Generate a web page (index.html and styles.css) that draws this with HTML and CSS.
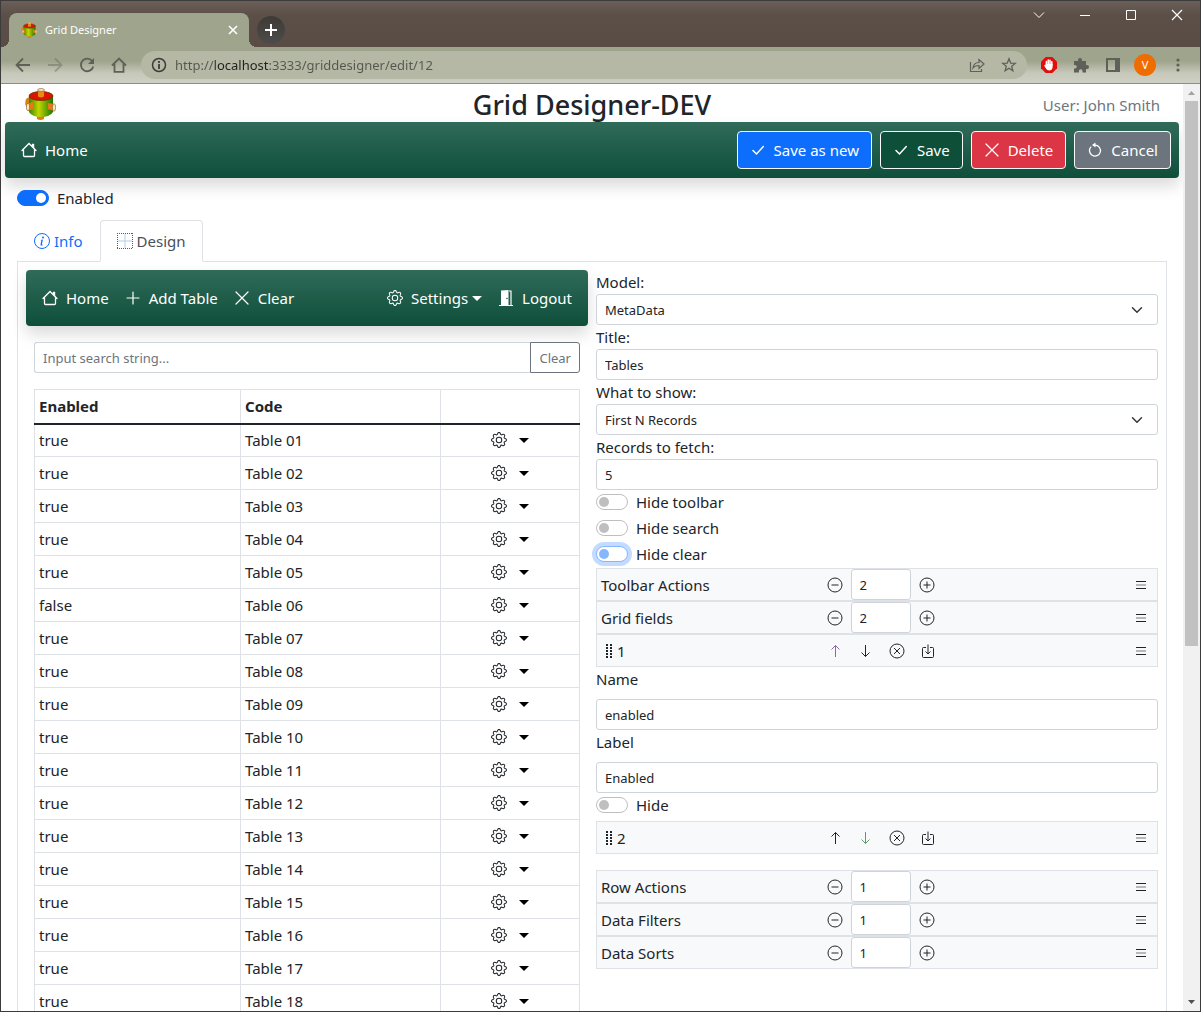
FILE: index.html
```html
<!DOCTYPE html>
<html lang="en">
<head>
<meta charset="utf-8">
<title>Grid Designer</title>
<link rel="stylesheet" href="styles.css">
</head>
<body>
<svg class="sprite" aria-hidden="true">
  <linearGradient id="can" x1="0" x2="1"><stop offset="0" stop-color="#2f8a00"/><stop offset=".4" stop-color="#c4d600"/><stop offset="1" stop-color="#167800"/></linearGradient>
  <symbol id="logo" viewBox="0 0 32 32">
    <path d="M13 27h7v4q-3.500 2-7 0z" fill="#e07a10"/>
    <path d="M2 11q3-3 4-1v9H3q-3-3-1-8z" fill="#d98212"/>
    <path d="M5 8v16q3 5 12 5t12-5V8z" fill="url(#can)"/>
    <ellipse cx="17" cy="8" rx="12" ry="4.500" fill="#dc1400" stroke="#5c3b00" stroke-width=".8"/>
    <path d="M14 2h6v6.500q-3 2-6 0z" fill="#e88a16"/>
    <ellipse cx="17" cy="2" rx="3.500" ry="1.400" fill="#fbeeb0" stroke="#77502a" stroke-width=".6"/>
    <path d="M4 15.500l5-1.500v7l-5 2z" fill="#e87818"/>
    <ellipse cx="4" cy="19" rx="1.600" ry="3.800" fill="#fbeeb0" stroke="#77502a" stroke-width=".6"/>
    <path d="M24 15l6 1v7l-6-2z" fill="#e87818"/>
    <ellipse cx="30" cy="19.500" rx="1.600" ry="3.800" fill="#fbeeb0" stroke="#77502a" stroke-width=".6"/>
  </symbol>
  <symbol id="house" viewBox="0 0 16 16"><path d="M2.500 7.500v6a1 1 0 0 0 1 1h9a1 1 0 0 0 1-1v-6M1 8.500l7-7 7 7" fill="none" stroke="currentColor" stroke-width="1.300" stroke-linecap="round"/><path d="M13.200 2.300V6.500l-2.400-2.400V2.300a.5.5 0 0 1 .5-.5h1.400a.5.5 0 0 1 .5.5z"/></symbol>
  <symbol id="check" viewBox="0 0 16 16"><path d="M3 8.500l3.500 3.500L13.300 4.500" fill="none" stroke="currentColor" stroke-width="1.500" stroke-linecap="round"/></symbol>
  <symbol id="cross" viewBox="0 0 16 16"><path d="M2 2l12 12M14 2L2 14" fill="none" stroke="currentColor" stroke-width="1.200" stroke-linecap="round"/></symbol>
  <symbol id="plus" viewBox="0 0 16 16"><path d="M8 2v12M2 8h12" fill="none" stroke="currentColor" stroke-width="1.200" stroke-linecap="round"/></symbol>
  <symbol id="undo" viewBox="0 0 16 16"><path d="M4.200 4.600a5.500 5.500 0 1 0 3.800-1.500" fill="none" stroke="currentColor" stroke-width="1.300"/><path d="M8.500.5v5L5 3z"/></symbol>
  <symbol id="info" viewBox="0 0 16 16"><circle cx="8" cy="8" r="7.500" fill="none" stroke="currentColor"/><path d="M8.930 6.588l-2.290.287-.082.380.450.083c.294.070.352.176.288.469l-.738 3.468c-.194.897.105 1.319.808 1.319.545 0 1.178-.252 1.465-.598l.088-.416c-.200.176-.492.246-.686.246-.275 0-.375-.193-.304-.533z"/><circle cx="9" cy="4.500" r="1"/></symbol>
  <symbol id="gridlines" viewBox="0 0 16 16"><path d="M0 .5h16M0 15.500h16M.5 0v16M15.500 0v16" fill="none" stroke="#5a5475" stroke-dasharray="1 1"/><path d="M8 1v14M1 8h14" fill="none" stroke="#b4cfe6"/></symbol>
  <symbol id="gear" viewBox="0 0 16 16"><path d="M8 4.754a3.246 3.246 0 1 0 0 6.492 3.246 3.246 0 0 0 0-6.492zM5.754 8a2.246 2.246 0 1 1 4.492 0 2.246 2.246 0 0 1-4.492 0z"/><path d="M9.796 1.343c-.527-1.790-3.065-1.790-3.592 0l-.094.319a.873.873 0 0 1-1.255.520l-.292-.160c-1.640-.892-3.433.902-2.540 2.541l.159.292a.873.873 0 0 1-.520 1.255l-.319.094c-1.790.527-1.790 3.065 0 3.592l.319.094a.873.873 0 0 1 .520 1.255l-.160.292c-.892 1.640.901 3.434 2.541 2.540l.292-.159a.873.873 0 0 1 1.255.520l.094.319c.527 1.790 3.065 1.790 3.592 0l.094-.319a.873.873 0 0 1 1.255-.520l.292.160c1.640.893 3.434-.902 2.540-2.541l-.159-.292a.873.873 0 0 1 .520-1.255l.319-.094c1.790-.527 1.790-3.065 0-3.592l-.319-.094a.873.873 0 0 1-.520-1.255l.160-.292c.893-1.640-.902-3.433-2.541-2.540l-.292.159a.873.873 0 0 1-1.255-.520l-.094-.319zm-2.633.283c.246-.835 1.428-.835 1.674 0l.094.319a1.873 1.873 0 0 0 2.693 1.115l.291-.160c.764-.415 1.600.420 1.184 1.185l-.159.292a1.873 1.873 0 0 0 1.116 2.692l.318.094c.835.246.835 1.428 0 1.674l-.319.094a1.873 1.873 0 0 0-1.115 2.693l.160.291c.415.764-.420 1.600-1.185 1.184l-.291-.159a1.873 1.873 0 0 0-2.693 1.116l-.094.318c-.246.835-1.428.835-1.674 0l-.094-.319a1.873 1.873 0 0 0-2.692-1.115l-.292.160c-.764.415-1.600-.420-1.184-1.185l.159-.291A1.873 1.873 0 0 0 1.945 8.930l-.319-.094c-.835-.246-.835-1.428 0-1.674l.319-.094A1.873 1.873 0 0 0 3.060 4.377l-.160-.292c-.415-.764.420-1.600 1.185-1.184l.292.159a1.873 1.873 0 0 0 2.692-1.115z"/></symbol>
  <symbol id="caret" viewBox="0 0 10 5"><path d="M0 0h10L5 5z"/></symbol>
  <symbol id="door" viewBox="0 0 16 16"><path d="M1 15h14v1H1zM3 .5L10.500 0v16H3z"/><path d="M11 1h2v14.500" fill="none" stroke="currentColor" stroke-width="1.200"/><circle cx="9" cy="8.500" r=".8" fill="#1e5c48"/></symbol>
  <symbol id="minus-circle" viewBox="0 0 16 16"><circle cx="8" cy="8" r="7" fill="none" stroke="currentColor"/><path d="M4.500 8h7" stroke="currentColor"/></symbol>
  <symbol id="plus-circle" viewBox="0 0 16 16"><circle cx="8" cy="8" r="7" fill="none" stroke="currentColor"/><path d="M4.500 8h7M8 4.500v7" stroke="currentColor"/></symbol>
  <symbol id="x-circle" viewBox="0 0 16 16"><circle cx="8" cy="8" r="7" fill="none" stroke="currentColor"/><path d="M5 5l6 6M11 5l-6 6" stroke="currentColor"/></symbol>
  <symbol id="list" viewBox="0 0 16 16"><path d="M3 4.500h10M3 11.500h10" stroke="currentColor"/><path d="M3 8h10" stroke="currentColor" stroke-width="2" opacity=".3"/></symbol>
  <symbol id="up" viewBox="0 0 16 16"><path d="M8.500 14V2.500M4.500 6.500l4-4 4 4" fill="none" stroke="currentColor"/></symbol>
  <symbol id="down" viewBox="0 0 16 16"><path d="M7.500 2v11.500M3.500 9.500l4 4 4-4" fill="none" stroke="currentColor"/></symbol>
  <symbol id="insert" viewBox="0 0 16 16"><path d="M6 4.500H3.500a1 1 0 0 0-1 1v8a1 1 0 0 0 1 1h9a1 1 0 0 0 1-1v-8a1 1 0 0 0-1-1H10M8 1.500v9.500M5.500 8.500L8 11l2.500-2.500" fill="none" stroke="currentColor"/></symbol>
  <symbol id="grip" viewBox="0 0 6 14"><path d="M1 0v14M5 0v14" fill="none" stroke="currentColor" stroke-width="2" stroke-dasharray="2 1"/></symbol>
</svg>

<div class="window">
  <header class="tabstrip">
    <div class="browser-tab">
      <svg class="icon"><use href="#logo"/></svg>
      <span class="tab-title">Grid Designer</span>
      <button class="plain" aria-label="Close tab"><svg class="icon-s" viewBox="0 0 10 10"><path d="M1 1l8 8M9 1L1 9" stroke="#fff" stroke-width="1.600"/></svg></button>
    </div>
    <button class="new-tab" aria-label="New tab"><svg class="icon-m" viewBox="0 0 12 12"><path d="M6 0v12M0 6h12" stroke="#fff" stroke-width="2"/></svg></button>
    <div class="window-buttons">
      <button class="plain" aria-label="Search tabs"><svg class="icon-m" viewBox="0 0 12 12"><path d="M1 3.500l5 5 5-5" fill="none" stroke="#fff"/></svg></button>
      <button class="plain" aria-label="Minimize"><svg class="icon-m" viewBox="0 0 12 12"><path d="M1 6.500h10" stroke="#fff"/></svg></button>
      <button class="plain" aria-label="Maximize"><svg class="icon-m" viewBox="0 0 12 12"><path d="M1.500 1.500h9v9h-9z" fill="none" stroke="#fff"/></svg></button>
      <button class="plain" aria-label="Close window"><svg class="icon-m" viewBox="0 0 12 12"><path d="M1 1l10 10M11 1L1 11" stroke="#fff" stroke-width="1.200"/></svg></button>
    </div>
  </header>

  <div class="addressbar">
    <div class="nav-buttons">
      <button class="plain" aria-label="Back"><svg class="icon" viewBox="0 0 16 16"><path d="M15 8H2M8 1.500L1.500 8 8 14.500" fill="none" stroke="currentColor" stroke-width="1.800"/></svg></button>
      <button class="plain faded" aria-label="Forward"><svg class="icon" viewBox="0 0 16 16"><path d="M1 8h13M8 1.500L14.500 8 8 14.500" fill="none" stroke="currentColor" stroke-width="1.800"/></svg></button>
      <button class="plain" aria-label="Reload"><svg class="icon" viewBox="0 0 16 16"><path d="M13.500 4.500A6.300 6.300 0 1 0 14.300 9.500" fill="none" stroke="currentColor" stroke-width="1.800"/><path d="M15 1v6H9z"/></svg></button>
      <button class="plain" aria-label="Home page"><svg class="icon" viewBox="0 0 16 16"><path d="M1 8.500L8 1.500l7 7M3.500 7v7.800h9V7" fill="none" stroke="currentColor" stroke-width="1.800"/></svg></button>
    </div>
    <div class="omnibox">
      <svg class="icon site-info" viewBox="0 0 16 16"><circle cx="8" cy="8" r="6.500" fill="none" stroke="currentColor" stroke-width="1.500"/><path d="M8 7v5M8 4v2" stroke="currentColor" stroke-width="1.800"/></svg>
      <input class="url" type="text" aria-label="Address" value="http://localhost:3333/griddesigner/edit/12">
      <button class="plain" aria-label="Share"><svg class="icon" viewBox="0 0 16 16"><path d="M1.500 5v9.500h11V12M4 11c.5-4 3-5.500 6-5.500V2.500L15 7l-5 4.500V8.500c-3 0-4.500.5-6 2.500z" fill="none" stroke="currentColor" stroke-width="1.200"/></svg></button>
      <button class="plain" aria-label="Bookmark"><svg class="icon" viewBox="0 0 16 16"><path d="M8 1.800l1.700 4.300 4.600.300-3.600 2.900 1.200 4.500L8 11.300l-3.900 2.500 1.200-4.500L1.700 6.400l4.600-.300z" fill="none" stroke="currentColor" stroke-width="1.300"/></svg></button>
    </div>
    <div class="extensions">
      <button class="plain" aria-label="Blocker"><svg class="icon" viewBox="0 0 16 16"><path d="M4.700 0h6.600L16 4.700v6.600L11.300 16H4.700L0 11.300V4.700z" fill="#e30d0d"/><path d="M5.400 8V4.500M7.200 7.500V3M9 7.500V3.300M10.800 8V4.700M4 8.500l2 3" stroke="#fff" stroke-width="1.500" stroke-linecap="round"/><path d="M4.700 7h6.900v3.500q-.5 3-3.500 3-2.200 0-3.400-3z" fill="#fff"/></svg></button>
      <button class="plain" aria-label="Extensions"><svg class="icon" viewBox="0 0 16 16"><path d="M1 4h4V3a2 2 0 0 1 4 0v1h4v4h1a2 2 0 0 1 0 4h-1v3.500H9.500V14a1.800 1.800 0 0 0-3.600 0v1.500H1v-4h1a1.800 1.800 0 0 0 0-3.600H1z"/></svg></button>
      <button class="plain" aria-label="Side panel"><svg class="icon" viewBox="0 0 16 16"><path d="M1 1h14v14H1zM3 3v10h7V3z" fill-rule="evenodd"/></svg></button>
      <button class="avatar">V</button>
      <button class="plain" aria-label="Menu"><svg class="icon" viewBox="0 0 16 16"><circle cx="8" cy="3" r="1.600"/><circle cx="8" cy="8" r="1.600"/><circle cx="8" cy="13" r="1.600"/></svg></button>
    </div>
  </div>

  <div class="viewport">
    <main class="page">
      <div class="page-head">
        <svg class="app-logo"><use href="#logo"/></svg>
        <h1>Grid Designer-DEV</h1>
        <span class="user">User: John Smith</span>
      </div>

      <nav class="navbar main-nav">
        <a href="#" class="nav-link"><svg class="icon"><use href="#house"/></svg>Home</a>
        <div class="actions">
          <button class="btn primary"><svg class="icon"><use href="#check"/></svg>Save as new</button>
          <button class="btn green"><svg class="icon"><use href="#check"/></svg>Save</button>
          <button class="btn danger"><svg class="icon"><use href="#cross"/></svg>Delete</button>
          <button class="btn secondary"><svg class="icon"><use href="#undo"/></svg>Cancel</button>
        </div>
      </nav>

      <div class="body">
        <label class="switch first"><input type="checkbox" checked>Enabled</label>

        <div class="tabs">
          <a href="#" class="tab"><svg class="icon"><use href="#info"/></svg>Info</a>
          <a href="#" class="tab active"><svg class="icon"><use href="#gridlines"/></svg>Design</a>
        </div>

        <div class="pane">
          <section class="preview">
            <nav class="navbar">
              <div class="nav-group">
                <a href="#" class="nav-link"><svg class="icon"><use href="#house"/></svg>Home</a>
                <a href="#" class="nav-link"><svg class="icon"><use href="#plus"/></svg>Add Table</a>
                <a href="#" class="nav-link"><svg class="icon"><use href="#cross"/></svg>Clear</a>
              </div>
              <div class="nav-group">
                <a href="#" class="nav-link"><svg class="icon"><use href="#gear"/></svg><span class="with-caret">Settings<svg class="caret"><use href="#caret"/></svg></span></a>
                <a href="#" class="nav-link"><svg class="icon"><use href="#door"/></svg>Logout</a>
              </div>
            </nav>
            <div class="preview-body">
              <div class="search">
                <input class="control" type="text" aria-label="Search" placeholder="Input search string...">
                <button class="clear">Clear</button>
              </div>
              <table class="grid">
                <colgroup><col class="col-enabled"><col><col class="col-menu"></colgroup>
                <thead><tr><th>Enabled</th><th>Code</th><th></th></tr></thead>
                <tbody>
                  <tr><td>true</td><td>Table 01</td><td><button class="row-menu" aria-label="Row actions"><svg class="icon"><use href="#gear"/></svg><svg class="caret"><use href="#caret"/></svg></button></td></tr>
                  <tr><td>true</td><td>Table 02</td><td><button class="row-menu" aria-label="Row actions"><svg class="icon"><use href="#gear"/></svg><svg class="caret"><use href="#caret"/></svg></button></td></tr>
                  <tr><td>true</td><td>Table 03</td><td><button class="row-menu" aria-label="Row actions"><svg class="icon"><use href="#gear"/></svg><svg class="caret"><use href="#caret"/></svg></button></td></tr>
                  <tr><td>true</td><td>Table 04</td><td><button class="row-menu" aria-label="Row actions"><svg class="icon"><use href="#gear"/></svg><svg class="caret"><use href="#caret"/></svg></button></td></tr>
                  <tr><td>true</td><td>Table 05</td><td><button class="row-menu" aria-label="Row actions"><svg class="icon"><use href="#gear"/></svg><svg class="caret"><use href="#caret"/></svg></button></td></tr>
                  <tr><td>false</td><td>Table 06</td><td><button class="row-menu" aria-label="Row actions"><svg class="icon"><use href="#gear"/></svg><svg class="caret"><use href="#caret"/></svg></button></td></tr>
                  <tr><td>true</td><td>Table 07</td><td><button class="row-menu" aria-label="Row actions"><svg class="icon"><use href="#gear"/></svg><svg class="caret"><use href="#caret"/></svg></button></td></tr>
                  <tr><td>true</td><td>Table 08</td><td><button class="row-menu" aria-label="Row actions"><svg class="icon"><use href="#gear"/></svg><svg class="caret"><use href="#caret"/></svg></button></td></tr>
                  <tr><td>true</td><td>Table 09</td><td><button class="row-menu" aria-label="Row actions"><svg class="icon"><use href="#gear"/></svg><svg class="caret"><use href="#caret"/></svg></button></td></tr>
                  <tr><td>true</td><td>Table 10</td><td><button class="row-menu" aria-label="Row actions"><svg class="icon"><use href="#gear"/></svg><svg class="caret"><use href="#caret"/></svg></button></td></tr>
                  <tr><td>true</td><td>Table 11</td><td><button class="row-menu" aria-label="Row actions"><svg class="icon"><use href="#gear"/></svg><svg class="caret"><use href="#caret"/></svg></button></td></tr>
                  <tr><td>true</td><td>Table 12</td><td><button class="row-menu" aria-label="Row actions"><svg class="icon"><use href="#gear"/></svg><svg class="caret"><use href="#caret"/></svg></button></td></tr>
                  <tr><td>true</td><td>Table 13</td><td><button class="row-menu" aria-label="Row actions"><svg class="icon"><use href="#gear"/></svg><svg class="caret"><use href="#caret"/></svg></button></td></tr>
                  <tr><td>true</td><td>Table 14</td><td><button class="row-menu" aria-label="Row actions"><svg class="icon"><use href="#gear"/></svg><svg class="caret"><use href="#caret"/></svg></button></td></tr>
                  <tr><td>true</td><td>Table 15</td><td><button class="row-menu" aria-label="Row actions"><svg class="icon"><use href="#gear"/></svg><svg class="caret"><use href="#caret"/></svg></button></td></tr>
                  <tr><td>true</td><td>Table 16</td><td><button class="row-menu" aria-label="Row actions"><svg class="icon"><use href="#gear"/></svg><svg class="caret"><use href="#caret"/></svg></button></td></tr>
                  <tr><td>true</td><td>Table 17</td><td><button class="row-menu" aria-label="Row actions"><svg class="icon"><use href="#gear"/></svg><svg class="caret"><use href="#caret"/></svg></button></td></tr>
                  <tr><td>true</td><td>Table 18</td><td><button class="row-menu" aria-label="Row actions"><svg class="icon"><use href="#gear"/></svg><svg class="caret"><use href="#caret"/></svg></button></td></tr>
                </tbody>
              </table>
            </div>
          </section>

          <section class="settings">
            <label for="model">Model:</label>
            <select id="model" class="control"><option>MetaData</option></select>
            <label for="title">Title:</label>
            <input id="title" class="control" type="text" value="Tables">
            <label for="show">What to show:</label>
            <select id="show" class="control"><option>First N Records</option></select>
            <label for="fetch">Records to fetch:</label>
            <input id="fetch" class="control" type="text" value="5">
            <label class="switch"><input type="checkbox">Hide toolbar</label>
            <label class="switch"><input type="checkbox">Hide search</label>
            <label class="switch"><input type="checkbox" class="focused">Hide clear</label>

            <div class="item">
              <label class="item-title" for="n-toolbar">Toolbar Actions</label>
              <div class="stepper"><button class="plain" aria-label="Remove"><svg class="icon"><use href="#minus-circle"/></svg></button><input id="n-toolbar" class="control" type="text" value="2"><button class="plain" aria-label="Add"><svg class="icon"><use href="#plus-circle"/></svg></button></div>
              <button class="plain more" aria-label="Expand"><svg class="icon"><use href="#list"/></svg></button>
            </div>
            <div class="item">
              <label class="item-title" for="n-fields">Grid fields</label>
              <div class="stepper"><button class="plain" aria-label="Remove"><svg class="icon"><use href="#minus-circle"/></svg></button><input id="n-fields" class="control" type="text" value="2"><button class="plain" aria-label="Add"><svg class="icon"><use href="#plus-circle"/></svg></button></div>
              <button class="plain more" aria-label="Expand"><svg class="icon"><use href="#list"/></svg></button>
            </div>
            <div class="item">
              <span class="item-title numbered"><svg class="grip"><use href="#grip"/></svg>1</span>
              <div class="tools"><button class="plain" disabled aria-label="Move up"><svg class="icon off-up"><use href="#up"/></svg></button><button class="plain" aria-label="Move down"><svg class="icon"><use href="#down"/></svg></button><button class="plain" aria-label="Delete"><svg class="icon"><use href="#x-circle"/></svg></button><button class="plain" aria-label="Insert"><svg class="icon"><use href="#insert"/></svg></button></div>
              <button class="plain more" aria-label="Expand"><svg class="icon"><use href="#list"/></svg></button>
            </div>

            <label class="spaced" for="name">Name</label>
            <input id="name" class="control" type="text" value="enabled">
            <label class="spaced" for="label">Label</label>
            <input id="label" class="control" type="text" value="Enabled">
            <label class="switch"><input type="checkbox">Hide</label>

            <div class="item second">
              <span class="item-title numbered"><svg class="grip"><use href="#grip"/></svg>2</span>
              <div class="tools"><button class="plain" aria-label="Move up"><svg class="icon"><use href="#up"/></svg></button><button class="plain" disabled aria-label="Move down"><svg class="icon off-down"><use href="#down"/></svg></button><button class="plain" aria-label="Delete"><svg class="icon"><use href="#x-circle"/></svg></button><button class="plain" aria-label="Insert"><svg class="icon"><use href="#insert"/></svg></button></div>
              <button class="plain more" aria-label="Expand"><svg class="icon"><use href="#list"/></svg></button>
            </div>

            <div class="item">
              <label class="item-title" for="n-row">Row Actions</label>
              <div class="stepper"><button class="plain" aria-label="Remove"><svg class="icon"><use href="#minus-circle"/></svg></button><input id="n-row" class="control" type="text" value="1"><button class="plain" aria-label="Add"><svg class="icon"><use href="#plus-circle"/></svg></button></div>
              <button class="plain more" aria-label="Expand"><svg class="icon"><use href="#list"/></svg></button>
            </div>
            <div class="item">
              <label class="item-title" for="n-filters">Data Filters</label>
              <div class="stepper"><button class="plain" aria-label="Remove"><svg class="icon"><use href="#minus-circle"/></svg></button><input id="n-filters" class="control" type="text" value="1"><button class="plain" aria-label="Add"><svg class="icon"><use href="#plus-circle"/></svg></button></div>
              <button class="plain more" aria-label="Expand"><svg class="icon"><use href="#list"/></svg></button>
            </div>
            <div class="item">
              <label class="item-title" for="n-sorts">Data Sorts</label>
              <div class="stepper"><button class="plain" aria-label="Remove"><svg class="icon"><use href="#minus-circle"/></svg></button><input id="n-sorts" class="control" type="text" value="1"><button class="plain" aria-label="Add"><svg class="icon"><use href="#plus-circle"/></svg></button></div>
              <button class="plain more" aria-label="Expand"><svg class="icon"><use href="#list"/></svg></button>
            </div>
          </section>
        </div>
      </div>
    </main>

    <div class="scrollbar">
      <svg class="scroll-arrow" viewBox="0 0 17 17"><path d="M5 11h7L8.500 7z" fill="#a3a3a3"/></svg>
      <div class="track"><div class="thumb"></div></div>
      <svg class="scroll-arrow" viewBox="0 0 17 17"><path d="M5 6h7L8.500 10z" fill="#505050"/></svg>
    </div>
  </div>
</div>
</body>
</html>
```
FILE: styles.css
```css
* { box-sizing: border-box; }

body {
  margin: 0;
  font: 15px/24px "Noto Sans", "Open Sans", sans-serif;
  color: #212529;
  background: #fff;
}

input, select, button { font: inherit; color: inherit; }
a { color: inherit; text-decoration: none; }
svg { fill: currentColor; display: block; flex: none; }

.sprite { position: absolute; width: 0; height: 0; }
.icon { width: 16px; height: 16px; }
.icon-m { width: 12px; height: 12px; }
.icon-s { width: 10px; height: 10px; }
.caret { width: 10px; height: 5px; }

.plain {
  display: flex;
  padding: 0;
  border: 0;
  background: none;
}

/* Browser window */
.window {
  display: flex;
  flex-direction: column;
  height: 100vh;
  border: 1px solid #3b3b3b;
  overflow: hidden;
}

.tabstrip {
  display: flex;
  align-items: flex-end;
  flex: none;
  height: 46px;
  padding-left: 8px;
  background: linear-gradient(#6b5f59, #5b4f48 14px, #584c44);
}

.browser-tab {
  position: relative;
  display: flex;
  align-items: center;
  gap: 8px;
  width: 240px;
  height: 34px;
  padding: 0 11px 0 12px;
  border-radius: 8px 8px 0 0;
  background: #9fa48c;
  color: #fff;
}
.browser-tab::before,
.browser-tab::after {
  content: "";
  position: absolute;
  bottom: 0;
  width: 8px;
  height: 8px;
}
.browser-tab::before { right: 100%; background: radial-gradient(circle at 0 0, transparent 8px, #9fa48c 8px); }
.browser-tab::after { left: 100%; background: radial-gradient(circle at 100% 0, transparent 8px, #9fa48c 8px); }
.tab-title { flex: 1; font-size: 11px; }

.new-tab {
  display: flex;
  align-items: center;
  justify-content: center;
  width: 28px;
  height: 28px;
  margin: 0 0 3px 8px;
  padding: 0;
  border: 0;
  border-radius: 50%;
  background: linear-gradient(#3e3a36, #4c4c4a);
}

.window-buttons {
  display: flex;
  align-self: flex-start;
  gap: 34px;
  margin-left: auto;
  padding: 8px 17px 0 0;
}

.addressbar {
  display: flex;
  align-items: center;
  flex: none;
  height: 37px;
  padding: 0 14px;
  background: linear-gradient(#9fa48c, #9fa48c 14px, #c6c8ba 26px, #cfd0c4);
  border-bottom: 1px solid #8c8f80;
  color: #5f6058;
}
.nav-buttons { display: flex; gap: 16px; margin-right: 14px; }
.faded { opacity: .4; }

.omnibox {
  display: flex;
  align-items: center;
  gap: 16px;
  flex: 1;
  height: 28px;
  padding: 0 10px;
  border-radius: 14px;
  background: #b4b8a5;
}
.site-info { color: #3c3d38; margin-right: -8px; }
.url {
  flex: 1;
  min-width: 0;
  padding: 0;
  border: 0;
  outline: 0;
  font-size: 13px;
  color: transparent;
  background: linear-gradient(90deg, #55574e 40px, #20211d 40px 94px, #55574e 94px);
  background-clip: text;
}

.extensions { display: flex; align-items: center; gap: 16px; margin-left: 14px; }
.extensions .plain:last-child { margin: 0 0 0 -2px; }
.avatar {
  width: 22px;
  height: 22px;
  margin: 0 0 0 -3px;
  padding: 0;
  border: 0;
  border-radius: 50%;
  background: #ef6c00;
  color: #fff;
  font-size: 11px;
  line-height: 22px;
}

.viewport { display: flex; flex: 1; min-height: 0; }
.page { flex: 1; min-width: 0; overflow: hidden; }

.scrollbar {
  display: flex;
  flex-direction: column;
  width: 17px;
  background: #f1f1f1;
}
.scroll-arrow { width: 17px; height: 17px; }
.track { flex: 1; padding: 0 2px; }
.thumb { height: 61%; background: #c1c1c1; }

/* Page header */
.page-head {
  display: grid;
  grid-template-columns: 1fr auto 1fr;
  align-items: center;
  height: 38px;
  padding: 2px 23px 0;
}
.app-logo { width: 32px; height: 32px; }
h1 { margin: 0; font-size: 27px; font-weight: 500; line-height: 34px; padding-top: 2px; }
.user { justify-self: end; padding-top: 2px; color: #6c757d; }

/* Green bars */
.navbar {
  display: flex;
  align-items: center;
  justify-content: space-between;
  height: 56px;
  padding: 0 16px;
  border-radius: 4px;
  background: linear-gradient(#2f6b58, #0e4f3a);
  box-shadow: 0 8px 16px rgba(0, 0, 0, .15);
  color: #fff;
}
.main-nav { margin: 0 4px; padding-right: 8px; }
.nav-group { display: flex; gap: 16px; }
.nav-link { display: flex; align-items: center; gap: 8px; }
.with-caret { display: flex; align-items: center; gap: 4px; }

.actions { display: flex; gap: 8px; }
.btn {
  display: flex;
  align-items: center;
  gap: 8px;
  height: 38px;
  padding: 0 12px;
  border: 1px solid #f8f9fa;
  border-radius: 4px;
  color: #fff;
}
.primary { background: #0d6efd; }
.green { background: #0e4f3a; }
.danger { background: #dc3545; }
.secondary { background: #6c757d; }

.body { padding: 8px 16px 0; }

/* Switches */
.switch {
  display: flex;
  align-items: center;
  gap: 8px;
  height: 24px;
  margin-bottom: 2px;
}
.switch.first { margin-bottom: 10px; }
.switch input {
  appearance: none;
  display: flex;
  align-items: center;
  width: 32px;
  height: 16px;
  margin: 0;
  padding: 0 2px;
  border: 1px solid #bfbfbf;
  border-radius: 8px;
  background: #fff;
}
.switch input::before {
  content: "";
  width: 10px;
  height: 10px;
  border-radius: 50%;
  background: #bfbfbf;
}
.switch input:checked {
  justify-content: flex-end;
  border-color: #0d6efd;
  background: #0d6efd;
}
.switch input:checked::before { background: #fff; }
.switch input.focused {
  border-color: #86b7fe;
  box-shadow: 0 0 0 4px rgba(13, 110, 253, .25);
}
.switch input.focused::before { background: #86b7fe; }

/* Tabs */
.tabs { display: flex; border-bottom: 1px solid #dee2e6; }
.tab {
  display: flex;
  align-items: center;
  gap: 4px;
  height: 42px;
  margin-bottom: -1px;
  padding: 0 16px;
  border: 1px solid transparent;
  border-radius: 4px 4px 0 0;
  color: #0d6efd;
}
.tab.active {
  border-color: #dee2e6 #dee2e6 #fff;
  background: #fff;
  color: #495057;
}

.pane {
  display: grid;
  grid-template-columns: 1fr 1fr;
  gap: 8px;
  padding: 8px;
  border: 1px solid #dee2e6;
  border-top: 0;
}

/* Preview column */
.preview-body { padding: 16px 8px; }

.control {
  display: block;
  width: 100%;
  height: 31px;
  padding: 0 8px;
  border: 1px solid #ced4da;
  border-radius: 3px;
  background-color: #fff;
  font-size: 13px;
  outline: 0;
}
.control::placeholder { color: #6c757d; opacity: 1; }
select.control {
  appearance: none;
  background-image: url("data:image/svg+xml,%3Csvg xmlns='http://www.w3.org/2000/svg' viewBox='0 0 16 16'%3E%3Cpath fill='none' stroke='%23343a40' stroke-linecap='round' stroke-linejoin='round' stroke-width='2' d='M2 5l6 6 6-6'/%3E%3C/svg%3E");
  background-repeat: no-repeat;
  background-position: right 14px center;
  background-size: 12px;
}

.search { display: flex; margin-bottom: 16px; }
.search .control { flex: 1; border-right: 0; border-radius: 3px 0 0 3px; }
.clear {
  height: 31px;
  padding: 0 8px;
  border: 1px solid #6c757d;
  border-radius: 0 3px 3px 0;
  background: #fff;
  color: #6c757d;
  font-size: 13px;
}

.grid { width: 100%; table-layout: fixed; border-collapse: collapse; }
.col-enabled { width: 206px; }
.col-menu { width: 139px; }
.grid th, .grid td {
  height: 33px;
  padding: 0 4px;
  border: 1px solid #dee2e6;
  text-align: left;
}
.grid th { height: 34px; border-bottom: 2px solid #212529; }
.row-menu {
  display: flex;
  align-items: center;
  gap: 12px;
  margin: 0 auto;
  padding: 0;
  border: 0;
  background: none;
}
.row-menu .caret { color: #000; }

/* Settings column */
.settings > label:not(.switch) { display: block; }
.settings > .spaced { margin-bottom: 8px; }

.item {
  display: flex;
  align-items: center;
  height: 33px;
  border: 1px solid #dee2e6;
  background: #f8f9fb;
}
.item.second { margin: 4px 0 16px; }
.item-title { flex: 0 0 41%; padding-left: 4px; }
.item-title.numbered { display: flex; align-items: center; gap: 5px; padding-left: 9px; }
.grip { width: 6px; height: 14px; }
.stepper { display: flex; align-items: center; gap: 8px; }
.stepper .control { width: 60px; }
.tools { display: flex; gap: 15px; }
.more { margin: 0 8px 0 auto; }
.off-up { color: #8a6aa0; }
.off-down { color: #5f9a6a; }
```
